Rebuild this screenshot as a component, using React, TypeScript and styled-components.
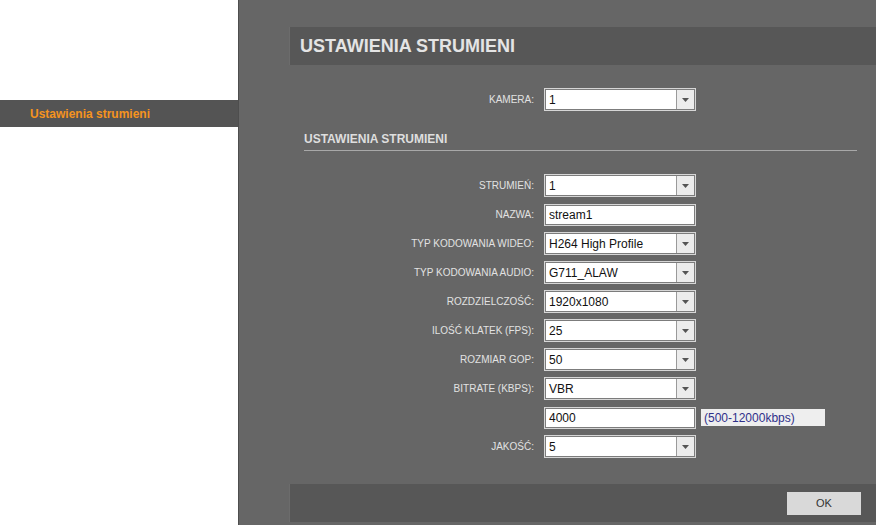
import React from "react";
import styled, { createGlobalStyle } from "styled-components";

const Global = createGlobalStyle`
  html, body { margin: 0; padding: 0; background: #ffffff; }
  body { font-family: "Liberation Sans", Arial, sans-serif; }
`;

const Page = styled.div`
  display: flex;
  width: 876px;
  height: 525px;
  overflow: hidden;
`;

const Sidebar = styled.nav`
  width: 238px;
  flex-shrink: 0;
  background: #ffffff;
  padding-top: 100px;
  box-sizing: border-box;
`;

const NavItem = styled.div<{ $active?: boolean }>`
  height: 27px;
  display: flex;
  align-items: center;
  padding-left: 30px;
  background: ${(p) => (p.$active ? "#545454" : "transparent")};
  color: ${(p) => (p.$active ? "#f5931e" : "#333")};
  font-weight: bold;
  font-size: 12px;
`;

const Main = styled.main`
  flex: 1;
  background: #666666;
  border-left: 1px solid #4e4e4e;
  padding: 27px 0 0 50px;
  box-sizing: border-box;
  display: flex;
  flex-direction: column;
`;

const PanelHeader = styled.h1`
  margin: 0;
  height: 38px;
  display: flex;
  align-items: center;
  padding-left: 10px;
  background: #575757;
  border-left: 1px solid #6c6c6c;
  color: #e4e4e4;
  font-size: 18px;
  font-weight: bold;
`;

const Form = styled.div`
  display: flex;
  flex-direction: column;
  padding-top: 20px;
`;

const SectionTitle = styled.h2`
  margin: 18px 19px 0 15px;
  padding-bottom: 4px;
  border-bottom: 1px solid #a8a8a8;
  color: #dedede;
  font-size: 12px;
  line-height: 14px;
  font-weight: bold;
`;

const Rows = styled.div`
  margin-top: 20px;
  display: flex;
  flex-direction: column;
`;

const Row = styled.div`
  display: grid;
  grid-template-columns: 245px auto auto;
  column-gap: 10px;
  align-items: center;
  justify-content: start;
  height: 29px;
`;

const Label = styled.label`
  text-align: right;
  color: #e2e2e2;
  font-size: 10px;
  text-transform: uppercase;
`;

const FieldFrame = styled.div<{ $h?: number }>`
  width: 152px;
  height: ${(p) => p.$h ?? 23}px;
  box-sizing: border-box;
  border: 1px solid #d6d6d6;
  display: flex;
`;

const FieldInner = styled.div`
  flex: 1;
  display: flex;
  border: 1px solid #7c7c7c;
  background: #ffffff;
  min-width: 0;
`;

const FieldText = styled.span`
  flex: 1;
  display: flex;
  align-items: center;
  padding-left: 3px;
  font-size: 12px;
  color: #111;
  white-space: nowrap;
`;

const ArrowBox = styled.span`
  width: 17px;
  flex-shrink: 0;
  border-left: 1px solid #9a9a9a;
  background: #ececec;
  display: flex;
  align-items: center;
  justify-content: center;
`;

const Hint = styled.span`
  height: 17px;
  width: 124px;
  box-sizing: border-box;
  margin-left: -5px;
  padding-left: 3px;
  background: #eeeeee;
  color: #30308a;
  font-size: 12px;
  display: flex;
  align-items: center;
`;

const Footer = styled.div`
  margin-top: 23px;
  height: 38px;
  background: #575757;
  border-left: 1px solid #6c6c6c;
  display: flex;
  align-items: center;
  justify-content: flex-end;
  padding-right: 15px;
`;

const OkButton = styled.button`
  width: 74px;
  height: 23px;
  border: none;
  background: #d9d9d9;
  color: #333;
  font-family: "Liberation Sans", Arial, sans-serif;
  font-size: 11px;
  padding: 0;
`;

const Select = ({ value }: { value: string }) => (
  <FieldFrame>
    <FieldInner>
      <FieldText>{value}</FieldText>
      <ArrowBox>
        <svg width="7" height="4" viewBox="0 0 7 4">
          <path d="M0 0 L7 0 L3.5 4 Z" fill="#555" />
        </svg>
      </ArrowBox>
    </FieldInner>
  </FieldFrame>
);

const Input = ({ value }: { value: string }) => (
  <FieldFrame $h={22}>
    <FieldInner>
      <FieldText>{value}</FieldText>
    </FieldInner>
  </FieldFrame>
);

type RowDef = { label: string; value: string; kind: "select" | "input"; hint?: string };

const rows: RowDef[] = [
  { label: "Strumień:", value: "1", kind: "select" },
  { label: "Nazwa:", value: "stream1", kind: "input" },
  { label: "Typ kodowania wideo:", value: "H264 High Profile", kind: "select" },
  { label: "Typ kodowania audio:", value: "G711_ALAW", kind: "select" },
  { label: "Rozdzielczość:", value: "1920x1080", kind: "select" },
  { label: "Ilość klatek (FPS):", value: "25", kind: "select" },
  { label: "Rozmiar GOP:", value: "50", kind: "select" },
  { label: "Bitrate (kbps):", value: "VBR", kind: "select" },
  { label: "", value: "4000", kind: "input", hint: "(500-12000kbps)" },
  { label: "Jakość:", value: "5", kind: "select" },
];

export default function App() {
  return (
    <>
      <Global />
      <Page>
        <Sidebar>
          <NavItem $active>Ustawienia strumieni</NavItem>
        </Sidebar>
        <Main>
          <PanelHeader>USTAWIENIA STRUMIENI</PanelHeader>
          <Form>
            <Row>
              <Label>Kamera:</Label>
              <Select value="1" />
            </Row>
            <SectionTitle>USTAWIENIA STRUMIENI</SectionTitle>
            <Rows>
              {rows.map((r, i) => (
                <Row key={i}>
                  <Label>{r.label}</Label>
                  {r.kind === "select" ? <Select value={r.value} /> : <Input value={r.value} />}
                  {r.hint && <Hint>{r.hint}</Hint>}
                </Row>
              ))}
            </Rows>
          </Form>
          <Footer>
            <OkButton>OK</OkButton>
          </Footer>
        </Main>
      </Page>
    </>
  );
}
